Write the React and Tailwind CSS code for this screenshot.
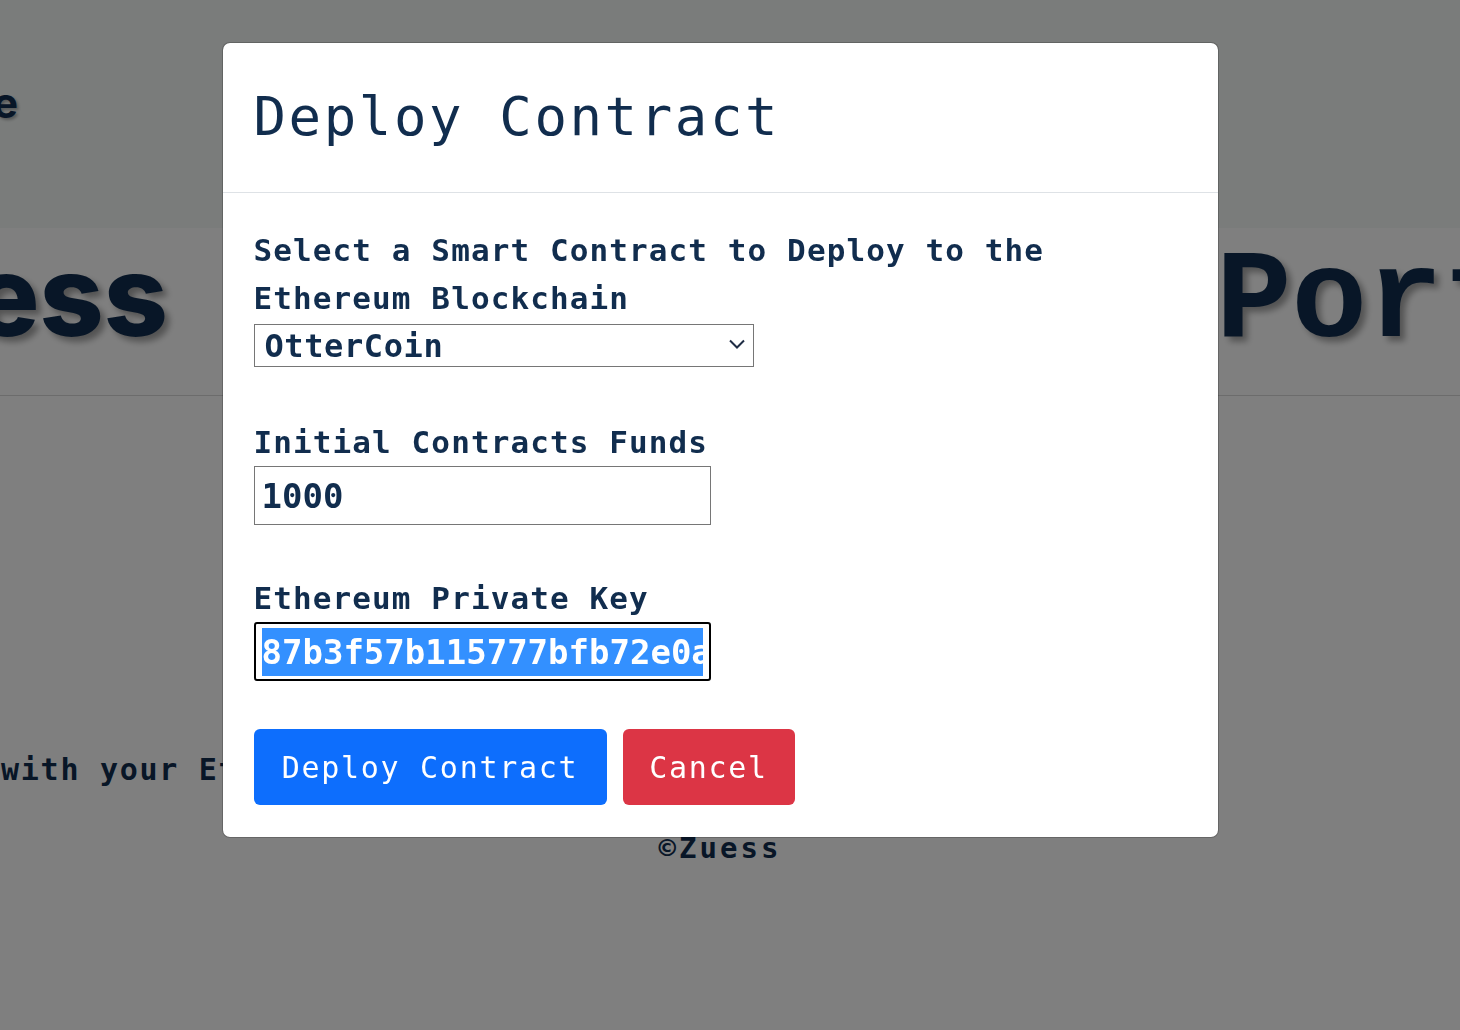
import React, { useState } from "react";

const KEY = "87b3f57b115777bfb72e0a4c2f9d6e1b3a8c5d7e9f0a1b2c3d4e5f60718293a4";

export default function App() {
  const [contract, setContract] = useState("OtterCoin");
  const [funds, setFunds] = useState("1000");

  return (
    <div className="relative min-h-screen overflow-hidden bg-white font-['DejaVu_Sans_Mono',monospace] text-[#112d4e]">
      {/* page behind the dialog */}
      <div className="h-[228px] bg-[#f5f9f7] pt-[82px]">
        <div className="flex w-[18px] justify-end">
          <span className="shrink-0 whitespace-nowrap font-['Inter',sans-serif] text-[42px] font-bold leading-none [text-shadow:2px_2px_3px_rgba(0,0,0,0.3)]">
            Home
          </span>
        </div>
      </div>

      <div className="flex h-[168px] items-baseline overflow-hidden border-b border-[#d9d9d9] pt-[11px]">
        <div className="flex w-[168px] shrink-0 justify-end">
          <span className="shrink-0 whitespace-nowrap font-['Inter',sans-serif] text-[112px] font-extrabold leading-none [text-shadow:5px_5px_6px_rgba(0,0,0,0.35)]">
            Zuess
          </span>
        </div>
        <span className="ml-[1048px] shrink-0 whitespace-nowrap font-['Liberation_Mono',monospace] text-[126px] font-bold leading-none [text-shadow:5px_5px_6px_rgba(0,0,0,0.35)]">
          Portal
        </span>
      </div>

      <p className="-ml-[157px] mt-[354px] whitespace-nowrap text-[30px] font-bold leading-[40px] tracking-[1.7px]">
        Connect with your Ethereum wallet
      </p>

      <div className="mt-[38px] w-[1440px] text-center text-[29px] font-bold leading-[40px] tracking-[3px]">
        ©Zuess
      </div>

      {/* backdrop */}
      <div className="fixed inset-0 bg-black/50" />

      {/* dialog */}
      <div className="fixed inset-y-0 left-0 flex w-[1440px] items-start justify-center pt-[42px]">
        <div className="w-[997px] rounded-[8px] border border-black/20 bg-white bg-clip-padding">
          <div className="flex h-[150px] items-center border-b border-[#dee2e6] px-[31px]">
            <h1 className="text-[54px] font-normal leading-[1.2] tracking-[2.6px]">Deploy Contract</h1>
          </div>

          <div className="px-[31px] pb-[32px] pt-[33px]">
            <label className="block text-[31px] font-bold leading-[48px] tracking-[1.1px]">
              Select a Smart Contract to Deploy to the
              <br />
              Ethereum Blockchain
            </label>
            <div className="relative mt-[2px] w-[500px]">
              <select
                value={contract}
                onChange={(e) => setContract(e.target.value)}
                className="block h-[43px] w-full appearance-none rounded-none border border-[#767676] bg-white pl-[10px] text-[32px] font-bold leading-none tracking-[0.6px] text-[#112d4e]"
              >
                <option>OtterCoin</option>
                <option>ZuessToken</option>
              </select>
              <svg
                className="pointer-events-none absolute right-[9px] top-[15px]"
                width="16"
                height="10"
                viewBox="0 0 16 10"
                fill="none"
              >
                <path d="M1 1.5l7 7 7-7" stroke="#1f2d45" strokeWidth="2" />
              </svg>
            </div>

            <label className="mt-[51px] block text-[31px] font-bold leading-[48px] tracking-[1.1px]">
              Initial Contracts Funds
            </label>
            <input
              value={funds}
              onChange={(e) => setFunds(e.target.value)}
              className="block h-[59px] w-[457px] rounded-none border border-[#767676] px-[7px] text-[34px] font-bold text-[#112d4e] outline-none"
            />

            <label className="mt-[49px] block text-[31px] font-bold leading-[48px] tracking-[1.1px]">
              Ethereum Private Key
            </label>
            <div className="flex h-[59px] w-[457px] items-center rounded-[3px] border-2 border-black px-[6px]">
              <div className="flex-1 overflow-hidden whitespace-nowrap">
                <span className="inline-block bg-[#3390ff] text-[34px] font-bold leading-[48px] text-white">
                  {KEY}
                </span>
              </div>
            </div>

            <div className="mt-[48px] flex gap-[16px]">
              <button className="h-[76px] w-[353px] rounded-[6px] bg-[#0d6efd] text-[30px] tracking-[1.7px] text-white">
                Deploy Contract
              </button>
              <button className="h-[76px] w-[172px] rounded-[6px] bg-[#dc3545] text-[30px] tracking-[1.7px] text-white">
                Cancel
              </button>
            </div>
          </div>
        </div>
      </div>
    </div>
  );
}
